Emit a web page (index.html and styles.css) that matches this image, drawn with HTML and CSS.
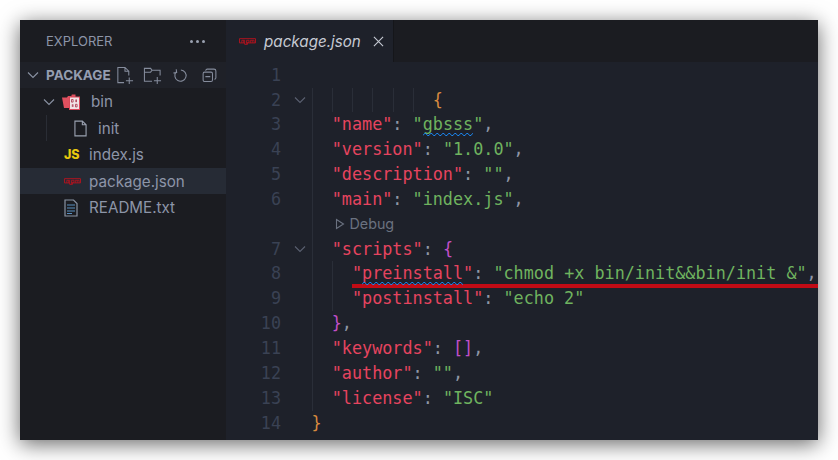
FILE: index.html
```html
<!DOCTYPE html>
<html lang="en">
<head>
<meta charset="utf-8">
<title>package.json</title>
<link rel="stylesheet" href="styles.css">
</head>
<body>
<svg class="defs" width="0" height="0" aria-hidden="true">
  <defs>
    <symbol id="npm" viewBox="0 0 18 7">
      <path d="M.5.5h17v4.500h-8.500v1.500h-3v-1.500h-5.500z" fill="none" stroke="#b3131f" stroke-width="1"/>
      <path d="M3 5V2.200M5 5V2.200M3 2.200h3V5M8 6V2.200h2.600V4.400H8M12 5V2.200h4V5M14 2.200V5" fill="none" stroke="#b3131f" stroke-width=".9"/>
    </symbol>
  </defs>
</svg>
<main class="window">
  <aside class="sidebar">
    <header class="side-title"><span>EXPLORER</span><span class="dots"><i></i><i></i><i></i></span></header>
    <div class="section">
      <svg class="chev chev-section" viewBox="0 0 12 8"><path d="M1 1.500l5 5 5-5"/></svg>
      <span class="section-name">PACKAGE</span>
      <span class="actions">
        <svg class="act act-file" viewBox="0 0 20 20"><path d="M9.500 17.500H3V1.500h7.500L14.500 5.500V10M10.500 1.500V5.500h4M15 12v7M11.500 15.500h7.500"/></svg>
        <svg class="act act-folder" viewBox="0 0 20 20"><path d="M9.500 16H1.500V2.500h6.500l1.500 2h8.500V10M1.500 6.500h6.500l1.500-2M15 11.500v7.500M11.500 15.500h7.500"/></svg>
        <svg class="act act-small act-refresh" viewBox="0 0 20 20"><path d="M11.500 2.800A7.500 7.500 0 1 1 5 4.500M5.500 1v4.500h-4.500" transform="rotate(-8 10 10)"/></svg>
        <svg class="act act-small" viewBox="0 0 20 20"><rect x="1.500" y="5.500" width="12.500" height="12.500" rx="2"/><path d="M5 3.500a2 2 0 0 1 2-2h9a2.500 2.500 0 0 1 2.500 2.500v9a2 2 0 0 1-2 2M4.500 11.500h6.500"/></svg>
      </span>
    </div>
    <ul class="tree">
      <li class="row row-folder">
        <svg class="chev" viewBox="0 0 12 8"><path d="M1 1.500l5 5 5-5"/></svg>
        <svg class="ico-folder" viewBox="0 0 18 16">
          <path d="M0 3.500h5l1-1.500h3V3l.8-2.500h3.700V3.500H12V14H2z" fill="#e0505f"/>
          <rect x="7.500" y="3" width="10" height="12.500" fill="#f1e3e5" stroke="#d8485a"/>
          <path d="M9.500 5.500h1.600v2.600H9.500zM13.800 5.500v2.600M14.500 5.500v2.600M10.300 10.300v2.600M11 10.300v2.600M13.500 10.300h1.600v2.600h-1.600z" fill="none" stroke="#a8344a" stroke-width=".8"/>
        </svg>
        <span>bin</span>
      </li>
      <li class="row row-nested">
        <svg class="ico-file" viewBox="0 0 14 18"><path d="M1 1h8l4 4v12H1zM9 1v4h4"/></svg>
        <span>init</span>
      </li>
      <li class="row row-file">
        <span class="ico-slot"><b class="js">JS</b></span>
        <span>index.js</span>
      </li>
      <li class="row row-file row-active">
        <span class="ico-slot"><svg class="ico-npm"><use href="#npm"/></svg></span>
        <span>package.json</span>
      </li>
      <li class="row row-file">
        <span class="ico-slot">
          <svg class="ico-txt" viewBox="0 0 14 18"><path d="M1 1h8.500L13 4.500V17H1z" fill="none" stroke="#8a93a3" stroke-width="1.200"/><path d="M3 6h8M3 9h8M3 12h8M3 14.500h5" stroke="#5a8fc0" stroke-width="1.200"/></svg>
        </span>
        <span>README.txt</span>
      </li>
    </ul>
  </aside>
  <section class="editor">
    <nav class="tabs">
      <div class="tab">
        <svg class="ico-npm"><use href="#npm"/></svg>
        <span class="tab-name">package.json</span>
        <svg class="close" viewBox="0 0 12 12"><path d="M1 1l10 10M11 1L1 11"/></svg>
      </div>
    </nav>
    <div class="code">
      <div class="redline"></div>
      <div class="ln"><span class="num">1</span><span class="fold"></span><code></code></div>
      <div class="ln"><span class="num">2</span><span class="fold"><svg class="chev" viewBox="0 0 12 8"><path d="M1 1.500l5 5 5-5"/></svg></span><code class="guides-six">            <i class="o">{</i></code></div>
      <div class="ln"><span class="num">3</span><span class="fold"></span><code class="guide">  <i class="k">"name"</i><i class="p">:</i> <i class="s">"<u>gbsss</u>"</i><i class="p">,</i></code></div>
      <div class="ln"><span class="num">4</span><span class="fold"></span><code class="guide">  <i class="k">"version"</i><i class="p">:</i> <i class="s">"1.0.0"</i><i class="p">,</i></code></div>
      <div class="ln"><span class="num">5</span><span class="fold"></span><code class="guide">  <i class="k">"description"</i><i class="p">:</i> <i class="s">""</i><i class="p">,</i></code></div>
      <div class="ln"><span class="num">6</span><span class="fold"></span><code class="guide">  <i class="k">"main"</i><i class="p">:</i> <i class="s">"index.js"</i><i class="p">,</i></code></div>
      <div class="ln ln-lens"><span class="num"></span><span class="fold"></span><code class="guide lens-wrap"><span class="lens"><svg viewBox="0 0 10 12"><path d="M1.500 1.500l7 4.500-7 4.500z"/></svg>Debug</span></code></div>
      <div class="ln"><span class="num">7</span><span class="fold"><svg class="chev" viewBox="0 0 12 8"><path d="M1 1.500l5 5 5-5"/></svg></span><code class="guide">  <i class="k">"scripts"</i><i class="p">:</i> <i class="m">{</i></code></div>
      <div class="ln"><span class="num">8</span><span class="fold"></span><code class="guide guide-two">    <i class="k">"<u>preinstall</u>"</i><i class="p">:</i> <i class="s">"chmod +x bin/init&amp;&amp;bin/init &amp;"</i><i class="p">,</i></code></div>
      <div class="ln"><span class="num">9</span><span class="fold"></span><code class="guide guide-two">    <i class="k">"postinstall"</i><i class="p">:</i> <i class="s">"echo 2"</i></code></div>
      <div class="ln"><span class="num">10</span><span class="fold"></span><code class="guide">  <i class="m">}</i><i class="p">,</i></code></div>
      <div class="ln"><span class="num">11</span><span class="fold"></span><code class="guide">  <i class="k">"keywords"</i><i class="p">:</i> <i class="m">[]</i><i class="p">,</i></code></div>
      <div class="ln"><span class="num">12</span><span class="fold"></span><code class="guide">  <i class="k">"author"</i><i class="p">:</i> <i class="s">""</i><i class="p">,</i></code></div>
      <div class="ln"><span class="num">13</span><span class="fold"></span><code class="guide">  <i class="k">"license"</i><i class="p">:</i> <i class="s">"ISC"</i></code></div>
      <div class="ln"><span class="num">14</span><span class="fold"></span><code><i class="o">}</i></code></div>
    </div>
  </section>
</main>
</body>
</html>
```
FILE: styles.css
```css
* { box-sizing: border-box; }
html, body { height: 100%; }
body {
  margin: 0;
  padding: 20px;
  background: #fff;
  overflow: hidden;
  font-family: Inter, "Liberation Sans", sans-serif;
}
.defs { position: absolute; }
.window {
  display: flex;
  width: 798px;
  height: 420px;
  background: #1e212a;
  box-shadow: 0 4px 20px rgba(0, 0, 0, .6);
  overflow: hidden;
}
.sidebar { width: 206px; flex: none; background: #1b1c21; color: #8d95a8; }
.side-title {
  height: 42px;
  padding: 0 21px 0 26px;
  display: flex;
  align-items: center;
  justify-content: space-between;
  font-size: 13px;
}
.dots { display: flex; gap: 3px; }
.dots i { width: 3px; height: 3px; border-radius: 50%; background: #9aa1b0; }
.section {
  height: 26px;
  background: #1f2128;
  display: flex;
  align-items: center;
  padding-left: 7px;
}
.section-name { margin-left: 7px; font-size: 13.500px; font-weight: 700; color: #959db0; width: 66px; flex: none; }
.actions { display: flex; align-items: center; margin-left: 3px; }
.act { width: 19px; height: 19px; fill: none; stroke: #858c9c; stroke-width: 1.100; flex: none; }
.act-file { margin-right: 9px; }
.act-folder { margin-right: 11px; }
.act-small { width: 15px; height: 15px; stroke-width: 1.400; }
.act-refresh { margin-right: 14px; }
.chev { width: 12px; height: 8px; fill: none; stroke: #8a92a3; stroke-width: 1.100; display: block; flex: none; }
.tree { list-style: none; margin: 0; padding: .4px 0 0; }
.row { height: 26.500px; display: flex; align-items: center; font-size: 15.200px; color: #8d95a8; }
.row-folder { padding-left: 23px; }
.ico-folder { width: 18px; height: 16px; margin: 0 9px 0 7px; flex: none; }
.row-folder span { margin-left: 2px; }
.row-nested { padding-left: 54px; position: relative; }
.row-nested::before { content: ""; position: absolute; left: 26px; top: 0; bottom: 0; width: 1px; background: #2a2d35; }
.ico-file { width: 13px; height: 17px; fill: none; stroke: #9aa1b0; stroke-width: 1.200; margin-right: 11px; }
.row-file { padding-left: 44px; }
.row-active { background: #262b35; }
.ico-slot { width: 25px; flex: none; display: flex; align-items: center; }
.js { color: #e8c80e; font-size: 12.500px; font-weight: 800; }
.ico-npm { width: 17px; height: 7px; display: block; flex: none; }
.ico-txt { width: 14px; height: 18px; }
.editor { flex: 1; min-width: 0; display: flex; flex-direction: column; }
.tabs { height: 42px; flex: none; background: #1b1c21; display: flex; }
.tab {
  width: 168px;
  background: #1e212a;
  display: flex;
  align-items: center;
  padding-left: 13px;
  border-right: 1px solid #15161a;
}
.tab-name { margin-left: 8px; font-size: 15.200px; font-style: italic; color: #c6cad3; }
.close { width: 11px; height: 11px; margin-left: 12px; fill: none; stroke: #c6cad3; stroke-width: 1.200; }
.code { flex: 1; position: relative; padding-top: .7px; }
.ln { height: 24.850px; display: flex; align-items: center; font-family: "DejaVu Sans Mono", "Liberation Mono", monospace; font-size: 16.800px; line-height: 24.850px; }
.num { width: 55px; flex: none; text-align: right; color: #3a4254; }
.fold { width: 30.500px; flex: none; display: flex; justify-content: center; padding-left: 7px; }
.fold .chev { stroke: #5a6070; }
code { font: inherit; white-space: pre; height: 100%; display: block; flex: 1; position: relative; }
code i { font-style: normal; }
.guide::before, .guides-six::before { content: ""; position: absolute; left: 0; top: 0; bottom: 0; width: 1px; background: #2a2e38; }
.guide-two::after { content: ""; position: absolute; left: 20px; top: 0; bottom: 0; width: 1px; background: #2a2e38; }
.guides-six::after {
  content: "";
  position: absolute;
  left: 20px;
  top: 0;
  bottom: 0;
  width: 82px;
  background: repeating-linear-gradient(90deg, #2a2e38 0 1px, transparent 1px 20.200px);
}
.k { color: #e6445f; }
.s { color: #6fb35f; }
.p { color: #8f97a6; }
.o { color: #d88a3f; }
.m { color: #c24fc8; }
u { text-decoration: none; position: relative; }
u::after {
  content: "";
  position: absolute;
  left: 0;
  right: 0;
  bottom: -2px;
  height: 3px;
  background: url("data:image/svg+xml,%3Csvg xmlns='http://www.w3.org/2000/svg' width='6' height='3'%3E%3Cpath d='M0 2.500L1.500 .5 3 .5 4.500 2.500 6 2.500' fill='none' stroke='%231a86f0' stroke-width='1'/%3E%3C/svg%3E") repeat-x;
}
.lens { display: flex; align-items: center; gap: 5px; height: 100%; font-family: Inter, "Liberation Sans", sans-serif; font-size: 14.300px; color: #6b7280; padding-left: 23px; }
.lens svg { width: 10px; height: 12px; fill: none; stroke: #6b7280; stroke-width: 1.100; }
.redline { position: absolute; left: 126px; right: 0; top: 222px; height: 4px; background: #c10b15; }
```
